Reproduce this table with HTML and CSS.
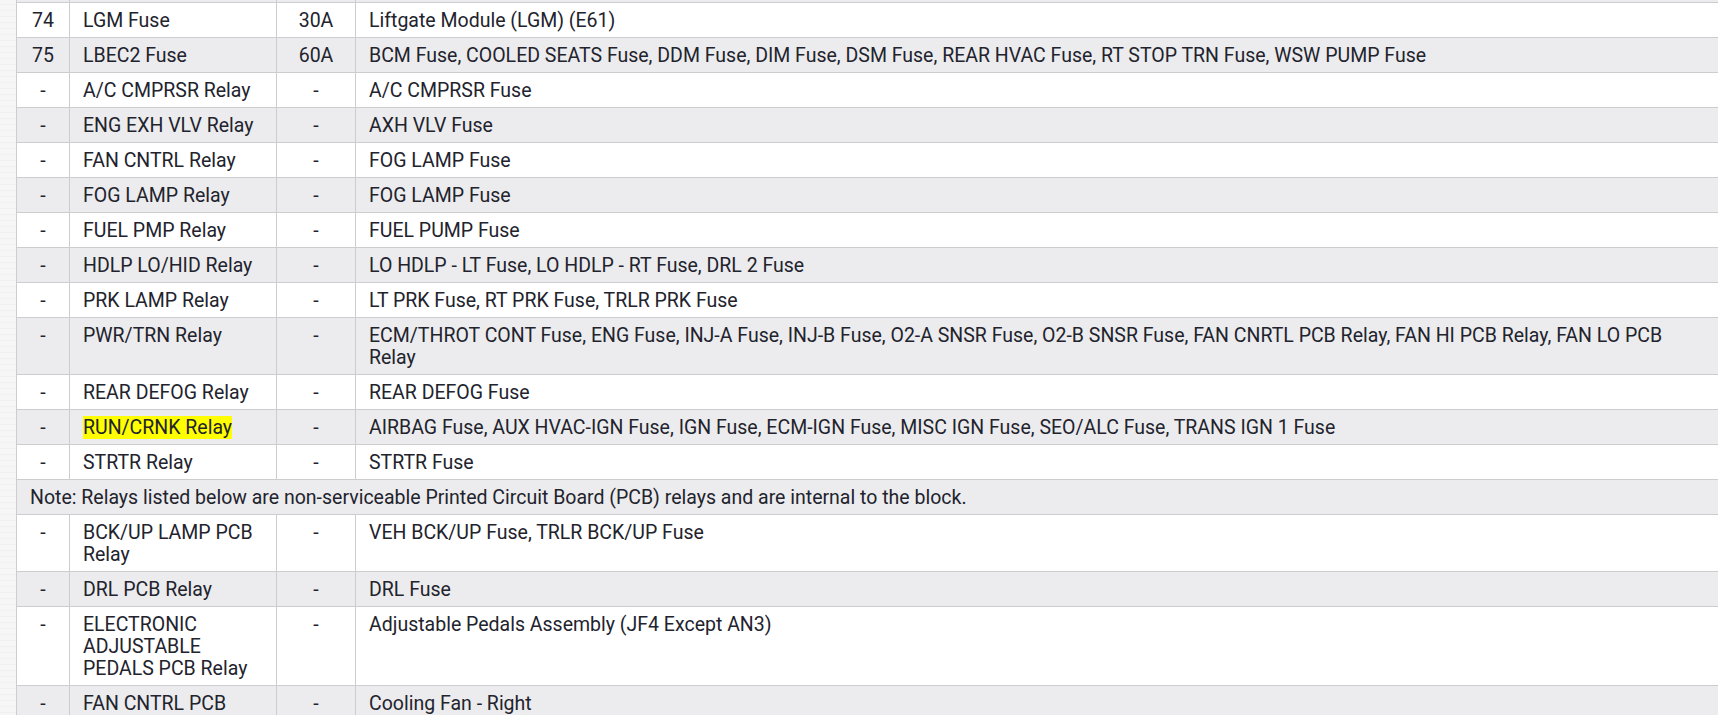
FILE: index.html
```html
<!DOCTYPE html>
<html lang="en">
<head>
<meta charset="utf-8">
<title>Fuse Block</title>
<link rel="stylesheet" href="styles.css">
</head>
<body>
<div class="page">
  <table class="fuses">
    <colgroup>
      <col class="c-num">
      <col class="c-name">
      <col class="c-amp">
      <col class="c-desc">
    </colgroup>
    <tbody>
      <tr class="cut"><td></td><td></td><td></td><td></td></tr>
      <tr><td class="ctr">74</td><td>LGM Fuse</td><td class="ctr">30A</td><td>Liftgate Module (LGM) (E61)</td></tr>
      <tr><td class="ctr">75</td><td>LBEC2 Fuse</td><td class="ctr">60A</td><td>BCM Fuse, COOLED SEATS Fuse, DDM Fuse, DIM Fuse, DSM Fuse, REAR HVAC Fuse, RT STOP TRN Fuse, WSW PUMP Fuse</td></tr>
      <tr><td class="ctr">-</td><td>A/C CMPRSR Relay</td><td class="ctr">-</td><td>A/C CMPRSR Fuse</td></tr>
      <tr><td class="ctr">-</td><td>ENG EXH VLV Relay</td><td class="ctr">-</td><td>AXH VLV Fuse</td></tr>
      <tr><td class="ctr">-</td><td>FAN CNTRL Relay</td><td class="ctr">-</td><td>FOG LAMP Fuse</td></tr>
      <tr><td class="ctr">-</td><td>FOG LAMP Relay</td><td class="ctr">-</td><td>FOG LAMP Fuse</td></tr>
      <tr><td class="ctr">-</td><td>FUEL PMP Relay</td><td class="ctr">-</td><td>FUEL PUMP Fuse</td></tr>
      <tr><td class="ctr">-</td><td>HDLP LO/HID Relay</td><td class="ctr">-</td><td>LO HDLP - LT Fuse, LO HDLP - RT Fuse, DRL 2 Fuse</td></tr>
      <tr><td class="ctr">-</td><td>PRK LAMP Relay</td><td class="ctr">-</td><td>LT PRK Fuse, RT PRK Fuse, TRLR PRK Fuse</td></tr>
      <tr><td class="ctr">-</td><td>PWR/TRN Relay</td><td class="ctr">-</td><td>ECM/THROT CONT Fuse, ENG Fuse, INJ-A Fuse, INJ-B Fuse, O2-A SNSR Fuse, O2-B SNSR Fuse, FAN CNRTL PCB Relay, FAN HI PCB Relay, FAN LO PCB Relay</td></tr>
      <tr><td class="ctr">-</td><td>REAR DEFOG Relay</td><td class="ctr">-</td><td>REAR DEFOG Fuse</td></tr>
      <tr><td class="ctr">-</td><td><span class="hl">RUN/CRNK Relay</span></td><td class="ctr">-</td><td>AIRBAG Fuse, AUX HVAC-IGN Fuse, IGN Fuse, ECM-IGN Fuse, MISC IGN Fuse, SEO/ALC Fuse, TRANS IGN 1 Fuse</td></tr>
      <tr><td class="ctr">-</td><td>STRTR Relay</td><td class="ctr">-</td><td>STRTR Fuse</td></tr>
      <tr><td colspan="4">Note: Relays listed below are non-serviceable Printed Circuit Board (PCB) relays and are internal to the block.</td></tr>
      <tr><td class="ctr">-</td><td>BCK/UP LAMP PCB Relay</td><td class="ctr">-</td><td>VEH BCK/UP Fuse, TRLR BCK/UP Fuse</td></tr>
      <tr><td class="ctr">-</td><td>DRL PCB Relay</td><td class="ctr">-</td><td>DRL Fuse</td></tr>
      <tr><td class="ctr">-</td><td>ELECTRONIC ADJUSTABLE PEDALS PCB Relay</td><td class="ctr">-</td><td>Adjustable Pedals Assembly (JF4 Except AN3)</td></tr>
      <tr><td class="ctr">-</td><td>FAN CNTRL PCB Relay</td><td class="ctr">-</td><td>Cooling Fan - Right</td></tr>
    </tbody>
  </table>
</div>
</body>
</html>
```
FILE: styles.css
```css
html, body {
  margin: 0;
  padding: 0;
  overflow: hidden;
}

body {
  background-color: #f6f6f6;
  background-image: repeating-linear-gradient(0deg, rgba(0,0,0,0.025) 0 1px, transparent 1px 6px);
  font-family: Roboto, "Liberation Sans", Arial, sans-serif;
  color: #22232d;
}

.page {
  padding-left: 16px;
  width: 1720px;
}

.fuses {
  border-collapse: collapse;
  table-layout: fixed;
  width: 1704px;
  background: #ffffff;
  font-size: 19.5px;
  line-height: 22px;
}

.c-num { width: 53px; }
.c-name { width: 207px; }
.c-amp { width: 79px; }

.fuses td {
  border: 1px solid #cdcdcf;
  padding: 7px 12px 5px 13px;
  vertical-align: top;
  text-align: left;
}

.fuses tr:nth-child(odd) td {
  background: #ececee;
}

.fuses td.ctr {
  text-align: center;
  padding-left: 6px;
  padding-right: 6px;
}

.fuses tr.cut td {
  border-top: 0;
  height: 2px;
  padding: 0;
  line-height: 0;
  font-size: 0;
}

.hl {
  background: #ffff00;
}
```
